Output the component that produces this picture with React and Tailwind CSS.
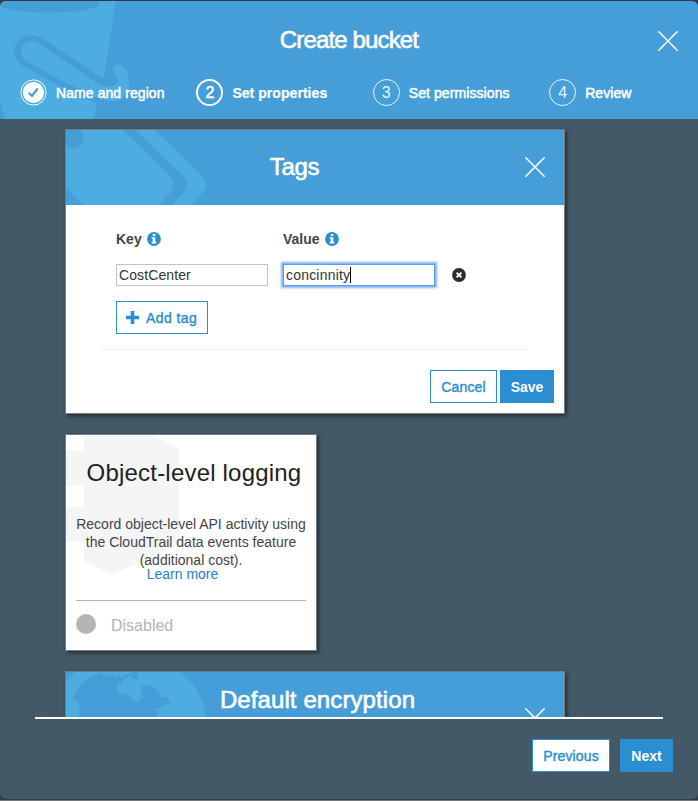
import React from 'react';

function Close({ className = '' }) {
  return (
    <svg className={`block h-5 w-5 ${className}`} viewBox="0 0 20 20" fill="none" stroke="#fff" strokeWidth="1.5" strokeLinecap="round">
      <path d="M.8.8 19.2 19.2M19.2.8.8 19.2" />
    </svg>
  );
}

function Info() {
  return (
    <svg className="block h-3.5 w-3.5" viewBox="0 0 14 14">
      <circle cx="7" cy="7" r="6.9" fill="#2a8ed1" />
      <path fill="#fff" d="M5.8 2.1h2.5v2H5.8zM4.7 5.2h3.6v4.6h1v1.600H4.700V9.800h1V6.800h-1z" />
    </svg>
  );
}

function Step({ n, label, state }) {
  const active = state === 'active';
  return (
    <li className="flex w-[176.4px] shrink-0 items-center">
      {state === 'done' ? (
        <svg className="block h-[27px] w-[27px]" viewBox="0 0 27 27">
          <circle cx="13.5" cy="13.5" r="12.6" fill="none" stroke="#fff" strokeWidth="1" />
          <circle cx="13.5" cy="13.5" r="10.6" fill="#fff" />
          <path d="m8.8 13.700 3.200 3.300 5.700-7.500" fill="none" stroke="#459ed7" strokeWidth="2.100" />
        </svg>
      ) : (
        <span
          className={`flex h-[27px] w-[27px] items-center justify-center rounded-full border-white text-base leading-none ${
            active ? 'border-2 [-webkit-text-stroke:0.5px_white]' : 'border opacity-90'
          }`}
        >
          {n}
        </span>
      )}
      <span
        className={`ml-[9px] text-sm leading-[18px] ${
          active ? 'font-bold tracking-[0.05px] [-webkit-text-stroke:0.2px_white]' : 'tracking-[0.08px] [-webkit-text-stroke:0.5px_white]'
        }`}
      >
        {label}
      </span>
    </li>
  );
}

function BucketArt() {
  return (
    <svg className="absolute left-0 top-0 h-[118px] w-[140px]" viewBox="0 1 140 118">
      <path d="M0 1h116l-12.500 78L97 104l-2 10-2 5H5L0 101z" fill="#4dade0" />
      <path d="M1 1h98.500v3c-3 5-21 8.500-49 8.500S4 10 1 6z" fill="#459ed7" />
      <path d="M14 52C14 40 24 34 33 35q7 1 12 5l59 39 8 9-15 16-37-17.500L28 69Q14 62 14 52z" fill="#459ed7" />
      <path d="M21 52C21 42 31 39 38 43l59 40q9 6 18 2 6-4 1-10-5-3-3-8 4-5 10-1 7 8 6 20-2 14-15 15-9 0-19-4L60 80 28 62q-7-4-7-10z" fill="#4dade0" />
    </svg>
  );
}

function TagArt() {
  return (
    <svg className="absolute left-0 top-0 h-[75px] w-[145px]" viewBox="0 0 145 75">
      <path d="M0 0h57l46 45q8 9 1 18L93 75H18L0 58z" fill="#4dade0" />
      <path d="M70 0h19l46 45q9 9 2 17l-12 13h-19l12-13q6-9-2-17z" fill="#4dade0" />
      <circle cx="7" cy="7" r="11" fill="#459ed7" />
    </svg>
  );
}

function GlobeArt() {
  return (
    <svg className="absolute left-0 top-0 h-[46px] w-[145px]" viewBox="0 0 145 46">
      <path d="M0 9 9 0h105q22 17 26 46H0z" fill="#4dade0" />
      <path d="M6 26 14 14l8-8 12-5 3 3 3-2 3 3 4-3 3 3 3-2 3 3 3-4 5 0 3-2h5v6l-4 1-3-3-7 3-2 4-5 2v7l5 2h4l3 3 5 2 2 4 3-1 1-4h3l-3-5 3-2-2-5 8-1 10 6 1 6 7 0 1 3 3 2-2 3-4-1-6 4-7 3h7l-1 4-6 5-1 3H13V36l2-3z" fill="#459ed7" />
    </svg>
  );
}

function LogArt() {
  return (
    <svg className="absolute left-0 top-0 h-[145px] w-[118px]" viewBox="0 0 118 145">
      <path d="M18 0h68l27 14v95l-67 31-28-14v-22L3 108l-3-1V72h18V51H0V16l3-2 15 3z" fill="#f4f6f6" />
    </svg>
  );
}

const card = 'relative shrink-0 overflow-hidden border border-[#777d80] bg-white shadow-[2px_2px_4px_rgba(0,0,0,0.5)]';

export default function App() {
  return (
    <div className="flex h-[801px] w-[698px] flex-col overflow-hidden bg-[#303b44] pt-px font-['Liberation_Sans',Arial,sans-serif] text-[#444]">
      <div className="flex h-[798px] flex-col overflow-hidden rounded-md bg-[#445968]">
        <header className="relative h-[118px] shrink-0 overflow-hidden bg-[#459ed7] text-white">
          <BucketArt />
          <div className="relative flex h-[78px] items-center justify-center">
            <h1 className="text-2xl leading-7 tracking-[-0.85px] [-webkit-text-stroke:0.6px_white]">Create bucket</h1>
            <Close className="absolute right-5 top-[30px]" />
          </div>
          <ol className="relative flex pl-5">
            <Step n="1" label="Name and region" state="done" />
            <Step n="2" label="Set properties" state="active" />
            <Step n="3" label="Set permissions" />
            <Step n="4" label="Review" />
          </ol>
        </header>

        <main className="flex h-[598px] shrink-0 flex-col gap-5 overflow-hidden pl-[65px] pt-2.5">
          <section className={`${card} h-[285px] w-[500px]`}>
            <div className="relative flex h-[75px] items-center justify-center bg-[#459ed7] text-white">
              <TagArt />
              <h2 className="relative mb-0.5 mr-[41px] text-2xl leading-7 tracking-[-0.35px] [-webkit-text-stroke:0.6px_white]">Tags</h2>
              <Close className="absolute right-[19px] top-[27px]" />
            </div>
            <div className="px-[50px] pt-[25px]">
              <div className="flex text-sm font-bold leading-[18px]">
                <div className="flex w-[167px] items-center gap-[5px]">Key <Info /></div>
                <div className="flex items-center gap-[5px]">Value <Info /></div>
              </div>
              <div className="mt-4 flex h-[22px] items-center text-sm text-[#333]">
                <div className="flex h-[22px] w-[152px] items-center border border-[#c4c4c4] pl-0.5 tracking-[0.1px]">CostCenter</div>
                <div className="ml-[15px] flex h-[22px] w-[152px] items-center border border-[#5a9dec] pl-0.5 tracking-[0.2px] shadow-[0_0_2px_2px_#7fb4f5]">
                  concinnity<span className="h-4 w-px bg-black" />
                </div>
                <svg className="ml-[17px] block h-3.5 w-3.5" viewBox="0 0 14 14">
                  <circle cx="7" cy="7" r="6.900" fill="#2c2c2c" />
                  <path d="m4.600 4.600 4.800 4.800m0-4.800L4.600 9.400" stroke="#fff" strokeWidth="2" />
                </svg>
              </div>
              <button className="mt-[15px] flex h-[33px] w-[92px] items-center border border-[#2a8ed1] pl-[9px] text-sm tracking-[0.4px] text-[#2a8ed1] [-webkit-text-stroke:0.4px_#2a8ed1]">
                <svg className="mr-[7px] block h-[13px] w-[13px]" viewBox="0 0 13 13">
                  <path d="M4.700 0h3.600v4.700h4.700v3.600H8.300v4.700H4.700V8.300H0V4.700h4.700z" fill="#2a8ed1" />
                </svg>
                Add tag
              </button>
            </div>
            <div className="ml-[35px] mt-[15px] h-px w-[427px] bg-[#f1f1f1]" />
            <div className="mt-5 flex justify-end gap-[3px] pr-2.5 text-sm">
              <button className="h-[33px] w-[67px] border border-[#2a8ed1] tracking-[0.15px] text-[#2a8ed1] [-webkit-text-stroke:0.4px_#2a8ed1]">Cancel</button>
              <button className="h-[33px] w-[54px] bg-[#2a8ed1] font-bold text-white">Save</button>
            </div>
          </section>

          <section className={`${card} h-[217px] w-[252px] text-center`}>
            <LogArt />
            <div className="relative">
              <h2 className="ml-1.5 pt-6 text-2xl leading-7 tracking-[0.2px] text-[#222]">Object-level logging</h2>
              <p className="mt-7 whitespace-nowrap text-sm leading-[18px]">
                Record object-level API activity using<br />the CloudTrail data events feature<br />(additional cost).
              </p>
              <a className="-mt-0.5 mr-[17px] block text-sm leading-[14px] text-[#2a80c9]">Learn more</a>
              <div className="mx-2.5 mt-[19px] h-px bg-[#b2b4b4]" />
              <div className="ml-2.5 mt-[13px] flex h-5 items-center text-base text-[#b2b4b4]">
                <span className="mr-[15px] h-5 w-5 rounded-full bg-[#b4b6b6]" />
                <span className="pt-[3px]">Disabled</span>
              </div>
            </div>
          </section>

          <section className={`${card} h-[217px] w-[500px]`}>
            <div className="relative h-[75px] bg-[#459ed7] text-center text-white">
              <GlobeArt />
              <h2 className="relative pl-[5px] pt-3.5 text-2xl leading-7 tracking-[0.1px] [-webkit-text-stroke:0.6px_white]">Default encryption</h2>
              <Close className="absolute right-[19px] top-9" />
            </div>
          </section>
        </main>

        <footer className="mx-[25px] flex-1">
          <div className="mx-2.5 h-0.5 bg-white" />
          <div className="mt-5 flex justify-end gap-2.5 text-sm">
            <button className="h-[33px] w-[78px] border border-[#2a8ed1] bg-white tracking-[0.15px] text-[#2a8ed1] [-webkit-text-stroke:0.4px_#2a8ed1]">Previous</button>
            <button className="h-[33px] w-[53px] bg-[#2a8ed1] font-bold text-white">Next</button>
          </div>
        </footer>
      </div>
      <div className="mt-px h-px bg-[#777]" />
    </div>
  );
}
